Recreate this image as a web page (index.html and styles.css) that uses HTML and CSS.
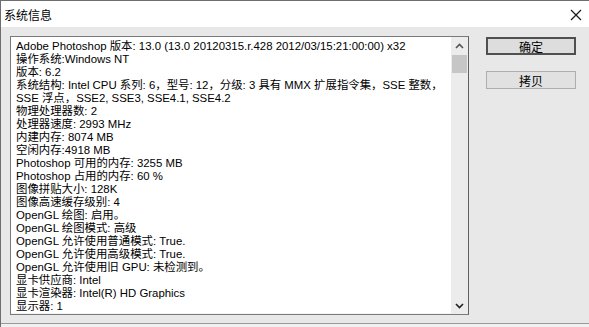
FILE: index.html
```html
<!DOCTYPE html>
<html>
<head>
<meta charset="utf-8">
<link rel="stylesheet" href="styles.css">
</head>
<body>
<div class="window">
  <div class="titlebar">
    <span class="title">系统信息</span>
    <span class="close">
      <svg width="12" height="12" viewBox="0 0 12 12"><path d="M1 1 L11 11 M11 1 L1 11" stroke="#1a1a1a" stroke-width="1.2" fill="none"/></svg>
    </span>
  </div>
  <div class="content">
    <div class="infobox">
      <div class="infotext">
        <div>Adobe Photoshop 版本: 13.0 (13.0 20120315.r.428 2012/03/15:21:00:00) x32</div>
        <div>操作系统:Windows NT</div>
        <div>版本: 6.2</div>
        <div>系统结构: Intel CPU 系列: 6，型号: 12，分级: 3 具有 MMX 扩展指令集，SSE 整数，</div>
        <div>SSE 浮点，SSE2, SSE3, SSE4.1, SSE4.2</div>
        <div>物理处理器数: 2</div>
        <div>处理器速度: 2993 MHz</div>
        <div>内建内存: 8074 MB</div>
        <div>空闲内存:4918 MB</div>
        <div>Photoshop 可用的内存: 3255 MB</div>
        <div>Photoshop 占用的内存: 60 %</div>
        <div>图像拼贴大小: 128K</div>
        <div>图像高速缓存级别: 4</div>
        <div>OpenGL 绘图: 启用。</div>
        <div>OpenGL 绘图模式: 高级</div>
        <div>OpenGL 允许使用普通模式: True.</div>
        <div>OpenGL 允许使用高级模式: True.</div>
        <div>OpenGL 允许使用旧 GPU: 未检测到。</div>
        <div>显卡供应商: Intel</div>
        <div>显卡渲染器: Intel(R) HD Graphics</div>
        <div>显示器: 1</div>
      </div>
      <div class="scrollbar">
        <div class="arrow">
          <svg width="9" height="6" viewBox="0 0 9 6"><path d="M1 5 L4.5 1.5 L8 5" stroke="#555" stroke-width="1.6" fill="none"/></svg>
        </div>
        <div class="track">
          <div class="thumb"></div>
        </div>
        <div class="arrow">
          <svg width="9" height="6" viewBox="0 0 9 6"><path d="M1 1 L4.5 4.5 L8 1" stroke="#222" stroke-width="1.6" fill="none"/></svg>
        </div>
      </div>
    </div>
    <div class="buttons">
      <div class="button default">确定</div>
      <div class="button">拷贝</div>
    </div>
  </div>
  <div class="bottomedge"></div>
</div>
</body>
</html>
```

FILE: styles.css
```css
html, body
{
  margin: 0;
  padding: 0;
  width: 100%;
  height: 100%;
  background-color: #f0f0f0;
  font-family: "Liberation Sans", "Noto Sans CJK SC", sans-serif;
  overflow: hidden;
}

.window
{
  display: flex;
  flex-direction: column;
  width: 589px;
  height: 327px;
  border-top: solid 1px #6e6e6e;
  border-left: solid 1px #6e6e6e;
  box-sizing: border-box;
}

.titlebar
{
  display: flex;
  align-items: center;
  justify-content: space-between;
  height: 26px;
  padding: 0 7px 0 3px;
  background-color: #ffffff;
  font-size: 12px;
  color: #000000;
}

.close
{
  display: flex;
  align-items: center;
  padding-top: 1px;
}

.content
{
  display: flex;
  flex: 1;
  gap: 17px;
  padding: 9px 0 0 9px;
  background-color: #e8e8e8;
}

.infobox
{
  display: flex;
  width: 459px;
  height: 279px;
  border: solid 1px #7a7a7a;
  border-right-color: #606060;
  box-shadow: inset -1px -1px 0 #f4f4f4;
  background-color: #ffffff;
  box-sizing: border-box;
}

/* Latin glyphs in the original are a bit narrower than Liberation Sans */
.infotext
{
  flex: 1;
  padding: 3px 0 0 5px;
  font-size: 11.4px;
  line-height: 13px;
  color: #000000;
  white-space: nowrap;
  overflow: hidden;
}

.scrollbar
{
  display: flex;
  flex-direction: column;
  width: 17px;
  background-color: #ececec;
}

.arrow
{
  display: flex;
  align-items: center;
  justify-content: center;
  height: 17px;
}

.track
{
  flex: 1;
}

.thumb
{
  width: 15px;
  height: 18px;
  margin: 1px 1px 0 1px;
  background-color: #c6c6c6;
}

.buttons
{
  display: flex;
  flex-direction: column;
  gap: 16px;
  padding-top: 1px;
}

.button
{
  display: flex;
  align-items: center;
  justify-content: center;
  width: 90px;
  height: 18px;
  border: solid 1px #adadad;
  background-color: #e1e1e1;
  box-sizing: border-box;
  font-size: 12px;
  color: #000000;
}

.default
{
  border: solid 2px #505050;
  background-color: #dddddd;
}

.bottomedge
{
  height: 3px;
  border-top: solid 1px #9a9a9a;
  background-color: #f0f0f0;
}
```
